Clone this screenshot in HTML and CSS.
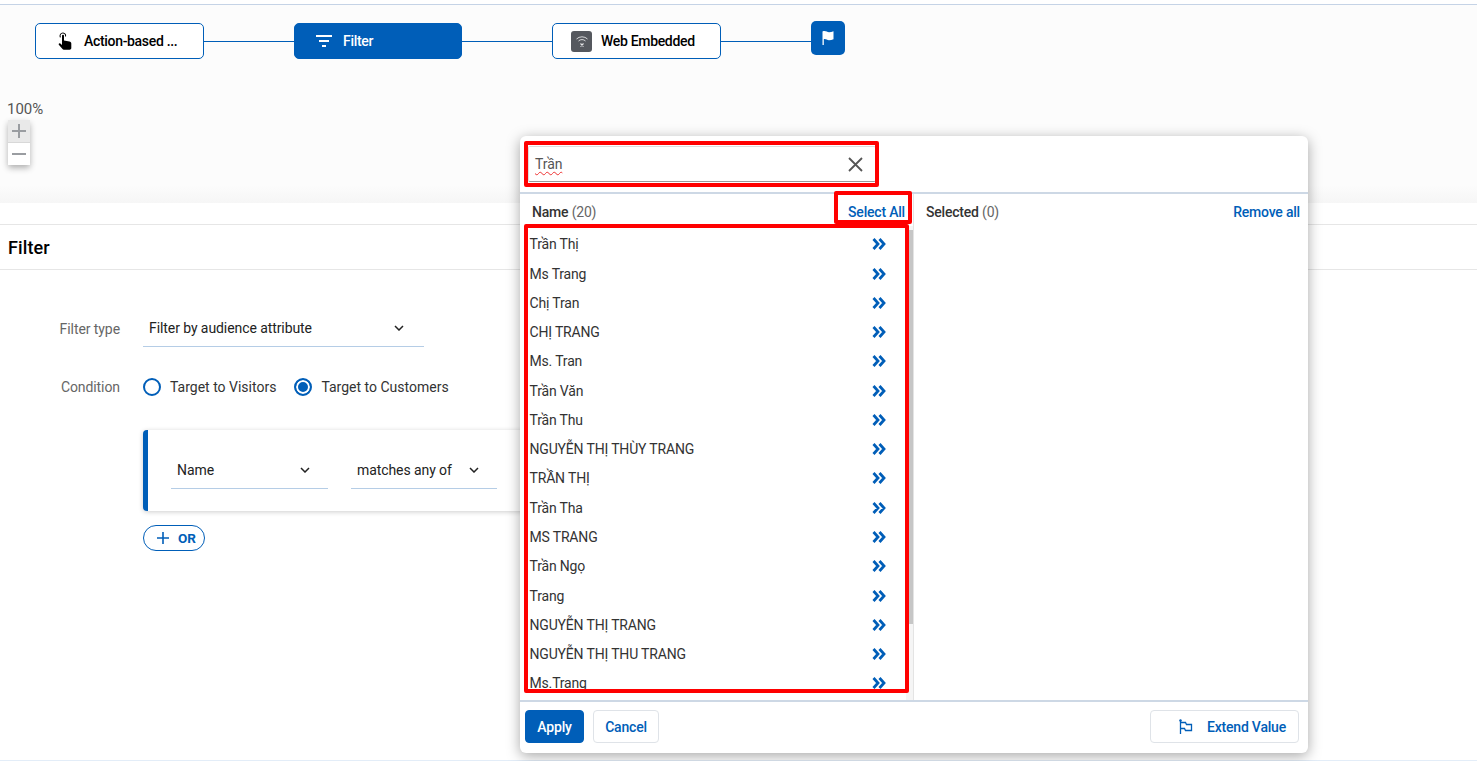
FILE: index.html
```html
<!DOCTYPE html>
<html lang="vi">
<head>
<meta charset="utf-8">
<title>Filter</title>
<link rel="stylesheet" href="styles.css">
</head>
<body>
<section class="canvas">
  <div class="flow">
    <div class="node">
      <svg class="node-icon" width="14" height="18" viewBox="0 0 14 18"><path d="M5 .4a3.500 3.500 0 0 0-3 5.300l.9-.7a2.300 2.300 0 1 1 4.200-1.300l.1 1 .9-.5A3.500 3.500 0 0 0 5 .4z" fill="#000"/><path d="M4 3.800a1 1 0 0 1 2 0v4.600l5.400 1.200c1.200.3 1.900 1 1.900 2V16c0 1-.8 1.700-1.700 1.700H5.800c-.6 0-1-.3-1.300-.8L.8 12.800c-.5-.9.600-1.900 1.500-1.200L4 13z" fill="#000"/></svg>
      <span class="node-label">Action-based ...</span>
    </div>
    <span class="link"></span>
    <div class="node node-active">
      <svg class="node-icon" width="16" height="12" viewBox="0 0 16 12"><path d="M0 1h16M3 6h10M6 11h4" stroke="#fff" stroke-width="1.800" fill="none"/></svg>
      <span class="node-label">Filter</span>
    </div>
    <span class="link"></span>
    <div class="node node-web">
      <span class="web-icon"><svg width="14" height="14" viewBox="0 0 14 14"><path d="M1.500 5a8 8 0 0 1 11 0M3.500 7a5 5 0 0 1 7 0" stroke="#d8d8da" stroke-width="1" fill="none"/><path d="M5.500 9.500l3 3M8.500 9.500l-3 3" stroke="#e8e8ea" stroke-width="1.100"/></svg></span>
      <span class="node-label">Web Embedded</span>
    </div>
    <span class="link"></span>
    <div class="flag-node"><svg width="14" height="16" viewBox="0 0 14 16"><path d="M1.500 1.500c3-1.200 4.500.8 6.500.8 1.500 0 3-.5 4.500-1v8c-1.500.6-3 1-4.500 1-2 0-3.500-1.800-5.200-1V15H1.500z" fill="#fff"/></svg></div>
  </div>
  <div class="zoom">
    <div class="zoom-value">100%</div>
    <div class="zoom-buttons">
      <span class="zoom-btn zoom-plus"><svg width="16" height="16" viewBox="0 0 16 16"><path d="M8 1v14M1 8h14" stroke="#9a9da1" stroke-width="2"/></svg></span>
      <span class="zoom-btn"><svg width="16" height="16" viewBox="0 0 16 16"><path d="M1 8h14" stroke="#9a9da1" stroke-width="2"/></svg></span>
    </div>
  </div>
</section>
<div class="spacer"></div>
<header class="section-head"><h1>Filter</h1></header>
<main class="form">
  <div class="form-row row-type">
    <label class="form-label">Filter type</label>
    <div class="select select-type"><span>Filter by audience attribute</span><svg class="chev" width="10" height="6" viewBox="0 0 10 6"><path d="M1 1l4 4 4-4" stroke="#222" stroke-width="1.500" fill="none"/></svg></div>
  </div>
  <div class="form-row row-cond">
    <label class="form-label">Condition</label>
    <div class="radios">
      <span class="radio"><i class="dot"></i>Target to Visitors</span>
      <span class="radio radio-on"><i class="dot"></i>Target to Customers</span>
    </div>
  </div>
  <div class="rule-card">
    <div class="select select-name"><span>Name</span><svg class="chev" width="10" height="6" viewBox="0 0 10 6"><path d="M1 1l4 4 4-4" stroke="#222" stroke-width="1.500" fill="none"/></svg></div>
    <div class="select select-op"><span>matches any of</span><svg class="chev" width="10" height="6" viewBox="0 0 10 6"><path d="M1 1l4 4 4-4" stroke="#222" stroke-width="1.500" fill="none"/></svg></div>
  </div>
  <button class="or-btn"><svg width="12" height="12" viewBox="0 0 12 12"><path d="M6 0v12M0 6h12" stroke="#005eb8" stroke-width="1.600"/></svg>OR</button>
</main>
<div class="bottom-line"></div>

<aside class="popover">
  <div class="pop-search">
    <div class="search-input"><span class="search-text">Trần</span><svg width="15" height="15" viewBox="0 0 15 15"><path d="M1 1l13 13M14 1L1 14" stroke="#555" stroke-width="1.800"/></svg></div>
  </div>
  <div class="pop-columns">
    <div class="col col-left">
      <div class="col-head"><span class="col-title">Name <em>(20)</em></span><a class="col-action">Select All</a></div>
      <ul class="list">
        <li>Trần Thị<svg class="dbl" width="14" height="12" viewBox="0 0 14 12"><path d="M1.500 1l4.500 5-4.500 5M7.500 1l4.500 5-4.500 5" stroke="#005eb8" stroke-width="2.800" fill="none"/></svg></li>
        <li>Ms Trang<svg class="dbl" width="14" height="12" viewBox="0 0 14 12"><path d="M1.500 1l4.500 5-4.500 5M7.500 1l4.500 5-4.500 5" stroke="#005eb8" stroke-width="2.800" fill="none"/></svg></li>
        <li>Chị Tran<svg class="dbl" width="14" height="12" viewBox="0 0 14 12"><path d="M1.500 1l4.500 5-4.500 5M7.500 1l4.500 5-4.500 5" stroke="#005eb8" stroke-width="2.800" fill="none"/></svg></li>
        <li>CHỊ TRANG<svg class="dbl" width="14" height="12" viewBox="0 0 14 12"><path d="M1.500 1l4.500 5-4.500 5M7.500 1l4.500 5-4.500 5" stroke="#005eb8" stroke-width="2.800" fill="none"/></svg></li>
        <li>Ms. Tran<svg class="dbl" width="14" height="12" viewBox="0 0 14 12"><path d="M1.500 1l4.500 5-4.500 5M7.500 1l4.500 5-4.500 5" stroke="#005eb8" stroke-width="2.800" fill="none"/></svg></li>
        <li>Trần Văn<svg class="dbl" width="14" height="12" viewBox="0 0 14 12"><path d="M1.500 1l4.500 5-4.500 5M7.500 1l4.500 5-4.500 5" stroke="#005eb8" stroke-width="2.800" fill="none"/></svg></li>
        <li>Trần Thu<svg class="dbl" width="14" height="12" viewBox="0 0 14 12"><path d="M1.500 1l4.500 5-4.500 5M7.500 1l4.500 5-4.500 5" stroke="#005eb8" stroke-width="2.800" fill="none"/></svg></li>
        <li>NGUYỄN THỊ THÙY TRANG<svg class="dbl" width="14" height="12" viewBox="0 0 14 12"><path d="M1.500 1l4.500 5-4.500 5M7.500 1l4.500 5-4.500 5" stroke="#005eb8" stroke-width="2.800" fill="none"/></svg></li>
        <li>TRẦN THỊ<svg class="dbl" width="14" height="12" viewBox="0 0 14 12"><path d="M1.500 1l4.500 5-4.500 5M7.500 1l4.500 5-4.500 5" stroke="#005eb8" stroke-width="2.800" fill="none"/></svg></li>
        <li>Trần Tha<svg class="dbl" width="14" height="12" viewBox="0 0 14 12"><path d="M1.500 1l4.500 5-4.500 5M7.500 1l4.500 5-4.500 5" stroke="#005eb8" stroke-width="2.800" fill="none"/></svg></li>
        <li>MS TRANG<svg class="dbl" width="14" height="12" viewBox="0 0 14 12"><path d="M1.500 1l4.500 5-4.500 5M7.500 1l4.500 5-4.500 5" stroke="#005eb8" stroke-width="2.800" fill="none"/></svg></li>
        <li>Trần Ngọ<svg class="dbl" width="14" height="12" viewBox="0 0 14 12"><path d="M1.500 1l4.500 5-4.500 5M7.500 1l4.500 5-4.500 5" stroke="#005eb8" stroke-width="2.800" fill="none"/></svg></li>
        <li>Trang<svg class="dbl" width="14" height="12" viewBox="0 0 14 12"><path d="M1.500 1l4.500 5-4.500 5M7.500 1l4.500 5-4.500 5" stroke="#005eb8" stroke-width="2.800" fill="none"/></svg></li>
        <li>NGUYỄN THỊ TRANG<svg class="dbl" width="14" height="12" viewBox="0 0 14 12"><path d="M1.500 1l4.500 5-4.500 5M7.500 1l4.500 5-4.500 5" stroke="#005eb8" stroke-width="2.800" fill="none"/></svg></li>
        <li>NGUYỄN THỊ THU TRANG<svg class="dbl" width="14" height="12" viewBox="0 0 14 12"><path d="M1.500 1l4.500 5-4.500 5M7.500 1l4.500 5-4.500 5" stroke="#005eb8" stroke-width="2.800" fill="none"/></svg></li>
        <li>Ms.Trang<svg class="dbl" width="14" height="12" viewBox="0 0 14 12"><path d="M1.500 1l4.500 5-4.500 5M7.500 1l4.500 5-4.500 5" stroke="#005eb8" stroke-width="2.800" fill="none"/></svg></li>
      </ul>
      <div class="scrollbar"><span class="thumb"></span></div>
    </div>
    <div class="col col-right">
      <div class="col-head"><span class="col-title">Selected <em>(0)</em></span><a class="col-action">Remove all</a></div>
    </div>
  </div>
  <div class="pop-foot">
    <button class="btn btn-primary">Apply</button>
    <button class="btn btn-cancel">Cancel</button>
    <button class="btn btn-extend"><svg width="14" height="16" viewBox="0 0 14 16"><circle cx="1.500" cy="1.500" r="1.200" fill="#005eb8"/><path d="M1.500 1v14M1.500 3.500h5l1 2h5v6h-6l-1-2h-4" stroke="#005eb8" stroke-width="1.300" fill="none"/></svg>Extend Value</button>
  </div>
  <span class="mark mark-search"></span>
  <span class="mark mark-select"></span>
  <span class="mark mark-list"></span>
</aside>
</body>
</html>
```

FILE: styles.css
```css
* { box-sizing: border-box; }
html, body { margin: 0; height: 100%; }
body {
  position: relative;
  width: 1477px;
  height: 761px;
  overflow: hidden;
  background: #fff;
  font-family: Roboto, "Noto Sans", sans-serif;
  font-size: 14px;
  letter-spacing: -.08px;
  color: #222;
}

/* Diagram canvas */
.canvas {
  margin-top: 4px;
  height: 199px;
  background: linear-gradient(to bottom, #fcfcfc 0, #fcfcfc 180px, #f6f6f6 100%);
  border-top: 1px solid #c5d3e6;
  padding: 16px 0 0 7px;
}
.flow { display: flex; align-items: flex-start; padding: 2px 0 0 28px; }
.node {
  width: 169px;
  height: 36px;
  display: flex;
  align-items: center;
  padding-left: 22px;
  gap: 12px;
  background: #fff;
  border: 1px solid #005eb8;
  border-radius: 5px;
  flex: none;
}
.node-label { font-weight: 500; color: #000; white-space: nowrap; letter-spacing: -.32px; }
.node-icon { flex: none; }
.node-active { width: 168px; background: #005eb8; padding-left: 21px; gap: 11px; }
.node-active .node-label { color: #fff; }
.node-web { padding-left: 18px; gap: 9px; }
.web-icon {
  width: 21px; height: 21px; border-radius: 3px;
  background: #55585e;
  display: flex; align-items: center; justify-content: center;
}
.link { flex: none; width: 90px; height: 1px; margin-top: 18px; background: #005eb8; }
.flag-node {
  width: 34px; height: 34px; margin-top: -2px; flex: none;
  background: #005eb8; border-radius: 5px;
  display: flex; align-items: center; justify-content: center;
}
.zoom { margin-top: 42px; }
.zoom-value { font-size: 15px; line-height: 16px; color: #555; letter-spacing: 0; }
.zoom-buttons {
  margin: 3px 0 0 1px;
  width: 22px;
  box-shadow: 0 3px 6px rgba(0, 0, 0, .3);
  border-radius: 2px;
}
.zoom-btn {
  display: flex; align-items: center; justify-content: center;
  height: 22.5px; background: #fff;
}
.zoom-plus { background: #e9e9e9; border-bottom: 1px solid #d8d8d8; }

.spacer { height: 21px; background: #fff; }

.section-head {
  height: 46px;
  padding: 0 8px;
  display: flex; align-items: center;
  border-top: 1px solid #e6e6e6;
  border-bottom: 1px solid #e6e6e6;
}
.section-head h1 { margin: 0; font-size: 18px; font-weight: 500; color: #000; letter-spacing: .1px; }

/* Form */
.form { padding: 0 0 0 143px; position: relative; }
.form-row { display: flex; align-items: center; position: relative; }
.form-label {
  position: absolute;
  right: calc(100% + 23px);
  white-space: nowrap;
  color: #666;
}
.row-type { padding-top: 40px; }
.row-type .form-label { top: 51px; }
.row-cond { margin-top: 28px; height: 24px; }
.select {
  display: flex; align-items: center; justify-content: space-between;
  height: 37px;
  border-bottom: 1px solid #b5cde6;
  padding-left: 6px;
  color: #222;
}
.select-type { width: 281px; padding-right: 20px; }
.radios { display: flex; gap: 18px; }
.radio { display: flex; align-items: center; gap: 9px; color: #333; letter-spacing: 0; }
.dot {
  width: 18px; height: 18px; border-radius: 50%;
  border: 2px solid #005eb8; background: #fff; display: block;
}
.radio-on .dot { background: #005eb8; box-shadow: inset 0 0 0 2px #fff; }

.rule-card {
  margin-top: 31px;
  width: 1160px;
  height: 81px;
  display: flex;
  gap: 23px;
  padding: 22px 0 0 23px;
  border-left: 5px solid #005eb8;
  border-radius: 4px 0 0 4px;
  box-shadow: 0 1px 5px rgba(0, 0, 0, .2);
  background: #fff;
}
.select-name { width: 157px; padding-right: 18px; }
.select-op { width: 146px; padding-right: 18px; }

.or-btn {
  margin-top: 14px;
  width: 62px; height: 26px;
  display: flex; align-items: center; gap: 9px;
  padding: 0 0 0 13px;
  font: 700 13.5px Roboto, sans-serif;
  color: #005eb8;
  background: #fff;
  border: 1px solid #005eb8;
  border-radius: 13px;
}
.bottom-line {
  position: absolute; left: 0; right: 0; bottom: 0; height: 1px; background: #e3edf8;
}

/* Popover */
.popover {
  position: absolute;
  left: 520px; top: 136px;
  width: 788px; height: 617px;
  background: #fff;
  border-radius: 6px;
  box-shadow: 0 3px 14px rgba(0, 0, 0, .35);
  display: flex; flex-direction: column;
}
.pop-search {
  height: 58px;
  padding: 10px 0 0 8px;
  border-bottom: 2px solid #cdd8e5;
  flex: none;
}
.search-input {
  width: 348px; height: 36px;
  display: flex; align-items: center; justify-content: space-between;
  padding: 0 12px 0 6px;
  border: 1px solid #ddd;
  border-bottom-color: #999;
  border-radius: 2px;
}
.search-text { color: #555; text-decoration: underline wavy #e33 1px; text-underline-offset: 2px; }
.pop-columns { flex: 1; display: flex; min-height: 0; }
.col { display: flex; flex-direction: column; min-height: 0; }
.col-left { width: 394px; position: relative; border-right: 1px solid #e4e4e4; }
.col-right { flex: 1; }
.col-head {
  height: 32px; flex: none;
  display: flex; align-items: center; justify-content: space-between;
  padding: 3px 8px 0 12px;
  letter-spacing: -.2px;
}
.col-title { font-weight: 500; color: #333; }
.col-title em { font-style: normal; font-weight: 400; color: #666; }
.col-action { font-weight: 500; color: #005eb8; }
.list {
  list-style: none; margin: 0; padding: 3.7px 7px 0 9.5px;
  flex: 1; min-height: 0; overflow: hidden;
}
.list li {
  height: 29.27px;
  display: flex; align-items: center; justify-content: space-between;
  padding-right: 20px;
  color: #333;
  white-space: nowrap;
  letter-spacing: -.17px;
}
.dbl { flex: none; }
.scrollbar {
  position: absolute; right: 0; top: 32px; bottom: 0;
  width: 7px; background: #f5f5f5;
  display: flex; flex-direction: column; align-items: flex-end;
  padding-top: 4px;
}
.thumb { width: 4px; height: 394px; background: #c6c6c6; }
.pop-foot {
  height: 53px; flex: none;
  display: flex; align-items: center; gap: 9px;
  padding: 0 9px 2px 5px;
  border-top: 2px solid #cdd8e5;
}
.btn {
  height: 33px;
  padding: 0 12px;
  font: 500 14px Roboto, sans-serif;
  letter-spacing: -.2px;
  color: #005eb8;
  background: #fff;
  border: 1px solid #dfe3e8;
  border-radius: 4px;
}
.btn-primary { background: #005eb8; border-color: #005eb8; color: #fff; width: 59px; padding: 0; }
.btn-cancel { width: 66px; padding: 0; }
.btn-extend {
  margin-left: auto;
  width: 149px;
  display: flex; align-items: center; justify-content: flex-end;
  gap: 14px;
}
.mark { position: absolute; border: 4px solid #f00; border-radius: 2px; pointer-events: none; }
.mark-search { left: 4px; top: 5px; width: 355px; height: 46px; }
.mark-select { left: 314px; top: 55px; width: 78px; height: 33px; }
.mark-list { left: 4px; top: 88px; width: 385px; height: 469px; }
```
